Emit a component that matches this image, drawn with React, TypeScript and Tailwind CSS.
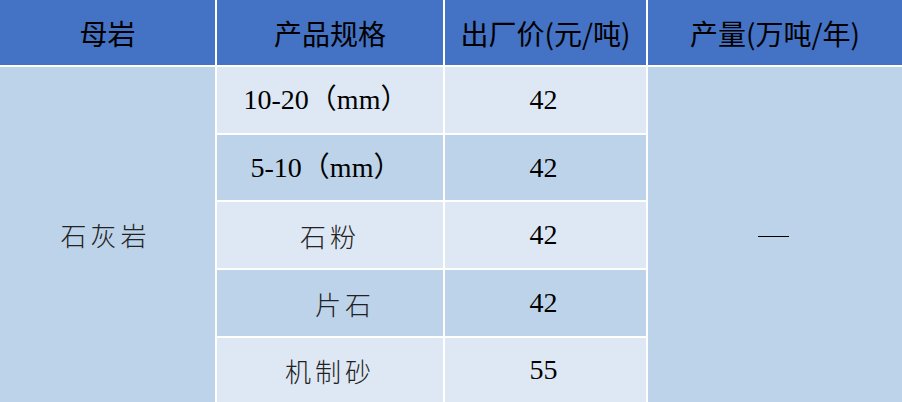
import React from "react";

const head = "flex items-center justify-center bg-[#4472C4] text-[28px] text-black font-['Noto_Sans_CJK_SC','Noto_Sans',sans-serif]";
const light = "bg-[#DEE8F4]";
const dark = "bg-[#BDD3EA]";
const cell = "flex items-center justify-center text-black";
const num = "text-[28px] font-['Liberation_Serif','Noto_Sans_CJK_SC',serif]";
const cjk = "text-[26px] font-light tracking-[4px] text-[#222] font-['Noto_Sans_CJK_SC',sans-serif]";

export default function App() {
  const rows: { spec: React.ReactNode; specCls: string; price: string; bg: string }[] = [
    { spec: "10-20（mm）", specCls: num + " pr-[8px]", price: "42", bg: light },
    { spec: "5-10（mm）", specCls: num + " pr-[8px]", price: "42", bg: dark },
    { spec: "石粉", specCls: cjk, price: "42", bg: light },
    { spec: "片石", specCls: cjk + " pl-[30px]", price: "42", bg: dark },
    { spec: "机制砂", specCls: cjk, price: "55", bg: light },
  ];
  return (
    <div className="w-[902px] h-[402px] overflow-hidden bg-white">
      <div className="grid grid-cols-[215px_226px_201px_254px] grid-rows-[65px_66px_65px_66px_66px_64px] gap-[2px] bg-white w-[902px] h-[402px]">
        <div className={head}>母岩</div>
        <div className={head}>产品规格</div>
        <div className={head}>出厂价(元/吨)</div>
        <div className={head}>产量(万吨/年)</div>
        <div className={`${cell} ${dark} row-start-2 row-end-7 col-start-1 col-end-2 pr-[4px]`}>
          <span className={cjk}>石灰岩</span>
        </div>
        {rows.map((r, i) => (
          <React.Fragment key={i}>
            <div className={`${cell} ${r.bg} col-start-2 col-end-3`} style={{ gridRowStart: i + 2 }}>
              <span className={r.specCls}>{r.spec}</span>
            </div>
            <div className={`${cell} ${r.bg} col-start-3 col-end-4`} style={{ gridRowStart: i + 2 }}>
              <span className={num + " pr-[4px]"}>{r.price}</span>
            </div>
          </React.Fragment>
        ))}
        <div className={`${cell} ${dark} row-start-2 row-end-7 col-start-4 col-end-5 pr-[4px]`}>
          <span className="block w-[31px] h-[1.5px] bg-black mt-[4px]"></span>
        </div>
      </div>
    </div>
  );
}
